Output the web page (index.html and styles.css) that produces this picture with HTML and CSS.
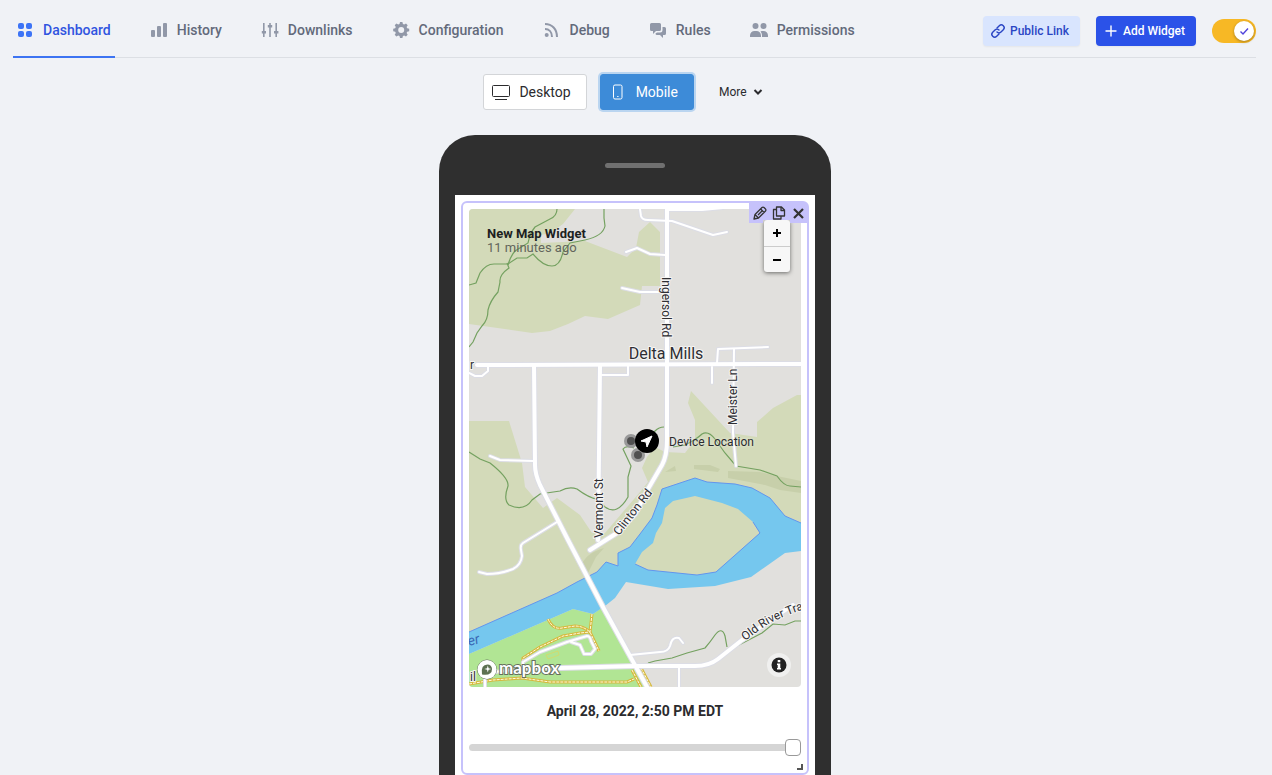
FILE: index.html
```html
<!DOCTYPE html>
<html lang="en">
<head>
<meta charset="utf-8">
<meta name="viewport" content="width=device-width, initial-scale=1">
<title>Dashboard</title>
<link rel="stylesheet" href="styles.css">
</head>
<body>
<div class="app">
  <header class="header">
    <nav class="tabs" aria-label="Sections">
      <a class="tab tab-active" href="#dashboard" aria-current="page"><svg class="tab-icon" viewBox="0 0 18 18"><rect x="1" y="2" width="6" height="6" rx="2"/><rect x="9" y="2" width="6" height="6" rx="2"/><rect x="1" y="10" width="6" height="6" rx="2"/><rect x="9" y="10" width="6" height="6" rx="2"/></svg><span>Dashboard</span></a>
      <a class="tab" href="#history"><svg class="tab-icon" viewBox="0 0 18 18"><rect x="0" y="9" width="4" height="7" rx="1"/><rect x="6" y="5" width="4" height="11" rx="1"/><rect x="12" y="2" width="4" height="14" rx="1"/></svg><span>History</span></a>
      <a class="tab" href="#downlinks"><svg class="tab-icon" viewBox="0 0 18 18"><path d="M1 2h1.600v8H4v2.500H2.600V16H1v-3.500H-.2V10H1zM7.200 2h1.600v2h1.400v2.500H8.800V16H7.200V6.500H5.800V4h1.400zM13.400 2H15v8h1.400v2.500H15V16h-1.600v-3.500H12V10h1.400z"/></svg><span>Downlinks</span></a>
      <a class="tab" href="#configuration"><svg class="tab-icon" viewBox="0 0 18 18"><path fill-rule="evenodd" d="M7 1h2.400l.5 2 1.300.6 1.800-1.100 1.700 1.700-1.100 1.800.6 1.300 2 .5v2.400l-2 .5-.6 1.300 1.100 1.800-1.700 1.700-1.800-1.100-1.300.6-.5 2H7l-.5-2-1.300-.6-1.800 1.100-1.700-1.700 1.100-1.800-.6-1.300-2-.5V7.800l2-.5.6-1.300-1.100-1.800 1.700-1.700 1.800 1.100L6.500 3zM8.200 6a3 3 0 1 0 0 6 3 3 0 0 0 0-6z"/></svg><span>Configuration</span></a>
      <a class="tab" href="#debug"><svg class="tab-icon" viewBox="0 0 18 18"><circle cx="2.700" cy="14" r="2"/><path class="line" d="M1 3c7 0 12 5 12 13M1 8c4 0 7 3 7 8"/></svg><span>Debug</span></a>
      <a class="tab" href="#rules"><svg class="tab-icon" viewBox="0 0 18 18"><path d="M1.500 2h8A1.500 1.500 0 0 1 11 3.500v5A1.500 1.500 0 0 1 9.500 10H6l-3 3v-3H1.500A1.500 1.500 0 0 1 0 8.500v-5A1.500 1.500 0 0 1 1.500 2zM12.500 6h2A1.500 1.500 0 0 1 16 7.500v5a1.500 1.500 0 0 1-1.500 1.500H13v3l-3-3H7a1.500 1.500 0 0 1-1.500-1.500L7 11.500h3a2.500 2.500 0 0 0 2.500-2.500z"/></svg><span>Rules</span></a>
      <a class="tab" href="#permissions"><svg class="tab-icon" viewBox="0 0 18 18"><circle cx="4.500" cy="5" r="3"/><circle cx="12.500" cy="5" r="3"/><path d="M-1 16v-1.500A4.500 4.500 0 0 1 3.500 10h2a4.500 4.500 0 0 1 4.500 4.500V16zM11 16v-1.500A6 6 0 0 0 9.500 10.400c.8-.3 1.600-.4 3-.4a4.500 4.500 0 0 1 4.500 4.500V16z"/></svg><span>Permissions</span></a>
    </nav>
    <div class="actions">
      <a class="btn btn-light" href="#public"><svg class="btn-icon" viewBox="0 0 14 14"><path class="line" d="M6 4l2.300-2.300a2.800 2.800 0 0 1 4 4L10 8a2.800 2.800 0 0 1-4 0M8 10l-2.300 2.300a2.800 2.800 0 0 1-4-4L4 6a2.800 2.800 0 0 1 4 0"/></svg><span>Public Link</span></a>
      <button class="btn btn-primary" type="button"><svg class="btn-icon" viewBox="0 0 14 14"><path class="line" d="M7 2v10M2 7h10"/></svg><span>Add Widget</span></button>
      <label class="toggle">
        <input class="toggle-input" type="checkbox" checked aria-label="Edit mode">
        <span class="toggle-knob"><svg viewBox="0 0 20 20"><path d="M6.500 10.500 9 13l5-5.500"/></svg></span>
      </label>
    </div>
  </header>

  <main class="main">
    <div class="devices">
      <button class="device" type="button"><svg class="device-icon" viewBox="0 0 20 18"><rect x="1.500" y="2.500" width="17" height="11" rx="1"/><path d="M4 16.500h12"/></svg><span>Desktop</span></button>
      <button class="device device-active" type="button"><svg class="device-icon" viewBox="0 0 20 18"><rect x="5.500" y="2" width="8.500" height="14" rx="1.500"/><path d="M9.200 13.500h1.300"/></svg><span>Mobile</span></button>
      <button class="more" type="button"><span>More</span><svg class="more-icon" viewBox="0 0 10 10"><path d="m1.500 3 3.500 3.500L8.500 3"/></svg></button>
    </div>

    <div class="phone">
      <div class="speaker"></div>
      <div class="screen">
        <section class="widget">
          <div class="map">
            <svg class="map-art" viewBox="469 209 332 478" role="img" aria-label="Map of Delta Mills">
              <defs>
                <path id="river-trail" d="M745 641 764 627Q777 618 808 608"/>
                <g id="roads">
                  <g class="major">
                    <path d="M477 365 801 364"/>
                    <path d="M667 209V440Q667 456 662 465L648 489 635 514 617 533 590 550"/>
                    <path d="M534 365 535 465Q535 474 540 485L567 538 603 607 647 687"/>
                    <path d="M600 366 598 540"/>
                    <path d="M560 668 635 666H695Q709 666 718 659L742 640 782 612 793 605"/>
                  </g>
                  <g class="minor">
                    <path d="M469 373 475 376H482L488 371V366"/>
                    <path d="M602 375H628V366"/>
                    <path d="M490 456 500 460 534 461"/>
                    <path d="M557 522 523 543Q520 545 521 550L522 556Q521 565 513 569 500 574 487 574L479 572"/>
                    <path d="M640 209 641 216Q642 220 648 220L672 221 713 235 727 232"/>
                    <path d="M668 210H702L723 208"/>
                    <path d="M626 252 637 248 650 254 665 255"/>
                    <path d="M622 288 640 292 660 292"/>
                    <path d="M717 363 718 349 768 347"/>
                    <path d="M734 349 733 433 736 466"/>
                    <path d="M712 367V383"/>
                    <path d="M630 655 660 652Q668 652 670 646 672 636 679 638L683 643"/>
                    <path d="M679 667V687"/>
                    <path d="M485 687V673L523 669 560 668M523 668V662L540 652 567 642 587 636Q590 636 591 641L595 649 591 654H584L580 645 571 642"/>
                  </g>
                </g>
                <g id="tracks">
                  <path d="M548 619Q553 630 562 628L575 626Q583 626 590 632L599 651"/>
                  <path d="M592 614 590 632 580 633 563 636 540 647 523 658 522 678"/>
                  <path d="M469 684 493 680 522 678 550 682H627L634 679"/>
                  <path d="M632 670 641 687M641 668 651 687"/>
                </g>
              </defs>
              <rect class="land" x="469" y="209" width="332" height="478"/>
              <g class="park">
                <path d="M469 209H575L563 224 550 233 541 235 541 243 585 241 627 257 636 248 639 232 650 222 660 232V286H642L640 305 608 319 585 316 568 324 550 331 532 333 469 324Z"/>
                <path d="M469 421H509L522 463 525 487 543 508 557 498 580 515 592 533 605 533 640 492 648 482 642 468 647 457 655 447 665 452 685 453 695 440V420L688 403 691 391 730 433 757 437V422L773 408 797 395H801V530L640 560 469 645Z"/>
              </g>
              <path class="shade" d="M665 472 675 466 676 471ZM694 465 710 465 720 469 718 472 694 469ZM728 471 760 472 777 476 801 481V493L780 490 765 485 728 478ZM580 568Q585 553 604 548L596 557 588 573Z"/>
              <path class="grass" d="M469 654 573 609 593 614 603 607 645 687H469Z"/>
              <path class="water" d="M469 632 557 593 577 582 597 572 606 562 618 566V553L630 547 640 534 652 518 657 505 662 489 695 478 707 482 735 484 752 488 770 498 785 516 801 523V551L785 553 751 577 715 586 668 589 626 582 615 598 605 606 593 614 573 609 469 654Z"/>
              <path class="shore" d="M469 632 557 593 577 582 597 572 606 562 618 566V553L630 547 640 534 652 518 657 505 662 489 695 478 707 482 735 484 752 488 770 498 785 516 801 523"/>
              <path class="island" d="M695 496 722 503 738 509 753 522 760 533 716 572 697 575 648 570 635 564 642 552 653 543 656 533 662 523 665 508 673 501Z"/>
              <path class="shore" d="M753 522 760 533 716 572 697 575 648 570 635 564"/>
              <g class="trail">
                <path d="M557 209Q557 216 550 219L535 227Q530 233 528 243L515 251Q510 257 508 265"/>
                <path d="M469 285 476 283 480 273Q486 264 494 264H508L517 258H527L533 254Q543 266 552 266 560 266 563 252L570 243 585 240Q603 236 605 226L604 218V209"/>
                <path d="M507 263 509 268Q499 275 500 282L498 292Q490 301 488 310 488 320 482 326L477 333 473 342 469 347"/>
                <path d="M469 452 480 459 490 463Q509 478 508 486 503 500 509 505 524 512 532 500L540 494 560 491Q569 486 577 489 589 498 597 499L605 507Q617 516 628 497V477L631 466 623 449Q626 445 634 448"/>
                <path d="M645 442 655 431Q659 427 664 427M673 447 685 445Q697 439 702 434 708 430 715 439L725 453 736 466 760 470 777 476Q784 486 790 486L801 487"/>
                <path d="M648 663 655 661 672 658 687 653 705 648Q711 641 715 635 722 626 725 636L727 647M737 646 762 633 773 624 785 625 795 621H801"/>
              </g>
              <path class="field" d="M546 655 558 651 559 655 548 659Z"/>
              <use href="#tracks" class="track-case"/>
              <use href="#tracks" class="track-dash"/>
              <use href="#roads" class="road-case"/>
              <use href="#roads" class="road-fill"/>
              <g class="place">
                <text class="town" x="666" y="359" text-anchor="middle">Delta Mills</text>
                <text transform="translate(662 277) rotate(90)">Ingersol Rd</text>
                <text transform="translate(737 425) rotate(-90)">Meister Ln</text>
                <text transform="translate(603 538) rotate(-90)">Vermont St</text>
                <text transform="translate(619 536) rotate(-52)">Clinton Rd</text>
                <text><textPath href="#river-trail">Old River Trai</textPath></text>
                <text x="470" y="369">r</text>
                <text x="470" y="681">il</text>
              </g>
              <text class="river" transform="translate(469 646) rotate(-15)">er</text>
              <circle class="halo" cx="631" cy="441" r="7"/><circle class="halo" cx="638" cy="455" r="7"/>
              <circle class="point" cx="631" cy="441" r="4"/><circle class="point" cx="638" cy="455" r="4"/>
              <circle class="device-pin" cx="647" cy="441" r="12"/>
              <path class="arrow" d="M652 436 641 441 646 442 647 447Z"/>
              <g class="logo">
                <circle cx="487" cy="669.500" r="9.500"/>
                <path class="logo-pin" d="M482 674.500Q480.500 664.500 487.500 664.500A4.500 4.500 0 0 1 492 669Q492 676 482 674.500Z"/>
                <path class="logo-star" d="M487.800 665.500 488.600 668.200 491.300 669 488.600 669.800 487.800 672.500 487 669.800 484.300 669 487 668.200Z"/>
                <text x="499" y="674">mapbox</text>
              </g>
            </svg>
            <div class="map-title">
              <h2 class="title">New Map Widget</h2>
              <p class="age">11 minutes ago</p>
            </div>
            <span class="device-label">Device Location</span>
            <div class="zoom">
              <button class="zoom-btn" type="button" aria-label="Zoom in"><svg viewBox="0 0 10 10"><path d="M5 1v8M1 5h8"/></svg></button>
              <button class="zoom-btn" type="button" aria-label="Zoom out"><svg viewBox="0 0 10 10"><path d="M1 5h8"/></svg></button>
            </div>
            <button class="info" type="button" aria-label="Map information"><svg viewBox="0 0 24 24"><circle cx="12" cy="12" r="7.500"/><path d="M10.700 7h2.600v2.300h-2.600zM10 10.500h3.300v4.500H14v1.500h-4V15h.7v-3H10z"/></svg></button>
          </div>
          <div class="widget-tools">
            <button class="tool" type="button" aria-label="Edit"><svg viewBox="0 0 14 14"><path d="m1 13 1-4.500 7-7a1.400 1.400 0 0 1 2 0l1.500 1.500a1.400 1.400 0 0 1 0 2l-7 7zM7.700 3l3.500 3.500M2 8.500 5.500 12M5 9l4-4"/></svg></button>
            <button class="tool" type="button" aria-label="Duplicate"><svg viewBox="0 0 14 14"><path d="M4.500 1h5L12.500 4v6h-8zM9 1v3.500h3.500M4.500 3.500h-3V13h7.500v-3"/></svg></button>
            <button class="tool tool-close" type="button" aria-label="Remove"><svg viewBox="0 0 14 14"><path d="m3 3 9 9m0-9-9 9"/></svg></button>
          </div>
          <label class="date" for="time">April 28, 2022, 2:50 PM EDT</label>
          <input class="slider" id="time" type="range" min="0" max="100" value="100">
          <span class="resize"></span>
        </section>
      </div>
    </div>
  </main>
</div>
</body>
</html>
```
FILE: styles.css
```css
* { box-sizing: border-box; }
body {
  margin: 0;
  background: #f0f2f6;
  color: #2b2b2e;
  font: 14px/20px Roboto, "Liberation Sans", sans-serif;
}
button { font: inherit; color: inherit; margin: 0; cursor: pointer; }
a { text-decoration: none; }
svg { display: block; flex-shrink: 0; fill: none; overflow: visible; }
.app { height: 100vh; overflow: hidden; }

.header {
  display: flex;
  justify-content: space-between;
  margin: 0 16px 0 13px;
  border-bottom: 1px solid #dcdfe4;
}
.tabs { display: flex; gap: 32px; margin-bottom: -1px; }
.tab {
  display: flex;
  align-items: center;
  gap: 8px;
  padding: 4px 4px 0;
  height: 58px;
  border-bottom: 2px solid transparent;
  color: #636a7b;
  font-weight: 500;
}
.tab-active { color: #3055e0; border-color: #3d74f2; }
.tab-icon { width: 18px; height: 18px; fill: #9198a8; }
.tab-active .tab-icon { fill: #3d74f6; }
.tab-icon .line { fill: none; stroke: #9198a8; stroke-width: 2; }

.actions { display: flex; align-items: center; gap: 16px; padding-top: 4px; }
.btn {
  display: flex;
  align-items: center;
  gap: 5px;
  height: 30px;
  padding: 0 11px 0 8px;
  border: 0;
  border-radius: 4px;
  font-size: 12px;
  font-weight: 500;
  box-shadow: 0 1px 2px #0000000d;
}
.btn-light { background: #d9e5fe; color: #2a45c4; }
.btn-primary { background: #2b52e8; color: #fff; }
.btn-icon { width: 14px; height: 14px; stroke: currentColor; stroke-width: 1.4; stroke-linecap: round; }
.toggle { position: relative; display: block; width: 44px; height: 24px; }
.toggle-input {
  appearance: none;
  display: block;
  width: 44px;
  height: 24px;
  margin: 0;
  border-radius: 12px;
  background: #c5c9d1;
}
.toggle-input:checked { background: #f7b825; }
.toggle-knob {
  position: absolute;
  top: 2px;
  right: 2px;
  width: 20px;
  height: 20px;
  border-radius: 50%;
  background: #fff;
  box-shadow: 0 1px 3px #0005;
  pointer-events: none;
}
.toggle-knob svg { stroke: #5143dc; stroke-width: 1.4; }

.main { padding: 16px 15px 0 13px; }
.devices { display: flex; justify-content: center; gap: 13px; }
.device {
  display: flex;
  align-items: center;
  gap: 8px;
  height: 36px;
  padding: 0 15px 0 7px;
  border: 1px solid #d3d5d8;
  border-radius: 3px;
  background: #fff;
  font-size: 14px;
}
.device-active {
  border-color: #3d8bd8;
  background: #3d8bd8;
  color: #fff;
  box-shadow: 0 0 0 2px #bad5f0;
}
.device-icon { width: 20px; height: 18px; stroke: currentColor; }
.more {
  display: flex;
  align-items: center;
  gap: 6px;
  padding: 0 24px 0 12px;
  border: 0;
  background: none;
  font-size: 12px;
}
.more-icon { width: 10px; height: 10px; stroke: currentColor; stroke-width: 2; }

.phone {
  width: 392px;
  margin: 25px auto 0;
  padding: 28px 16px 60px;
  border-radius: 36px;
  background: #2f2f2f;
}
.speaker { width: 60px; height: 5px; margin: 0 auto 27px; border-radius: 3px; background: #707070; }
.screen { min-height: 640px; padding: 6px; background: #fff; }
.widget {
  position: relative;
  padding: 6px 6px 17px;
  border: 2px solid #c6c2fb;
  border-radius: 6px;
}
.map { position: relative; border-radius: 4px; overflow: hidden; z-index: 1; }
.map-art { width: 100%; height: auto; overflow: hidden; }
.land { fill: #e1e0dd; }
.park, .island { fill: #d3dab9; }
.shade { fill: #c7cfaa; }
.grass { fill: #b1e594; }
.water { fill: #75c7ee; }
.shore { stroke: #6295ee; }
.trail { stroke: #74a160; stroke-width: 1.2; }
.field { stroke: #d0dc70; }
.track-case { stroke: #d6b83c; stroke-width: 3; }
.track-dash { stroke: #fffbe0; stroke-width: 1; stroke-dasharray: 3 1; }
.major, .minor { stroke-linecap: round; stroke-linejoin: round; }
.road-case { stroke: #dcdde5; }
.road-fill { stroke: #fff; }
.major { stroke-width: var(--major); }
.minor { stroke-width: var(--minor); }
.road-case { --major: 6px; --minor: 4px; }
.road-fill { --major: 4px; --minor: 2px; }
.place { fill: #2e2e33; stroke: #f6f5f3; stroke-width: 2; paint-order: stroke; stroke-linejoin: round; font-size: 12px; }
.town { font-size: 16px; }
.river { fill: #3b68b4; font-size: 14px; font-style: italic; }
.halo { fill: #999; }
.point { fill: #505050; }
.device-pin { fill: #000; }
.arrow { fill: #fff; stroke: #fff; stroke-linejoin: round; }
.logo { fill: #fff; stroke: #66705e; stroke-width: 1; paint-order: stroke; }
.logo text { font: 700 17px Lato, sans-serif; stroke-width: 2; }
.logo .logo-pin { fill: #5d7052; stroke: none; }
.logo .logo-star { fill: #fff; stroke: none; }

.map-title { position: absolute; top: 18px; left: 18px; line-height: 14px; font-size: 13px; }
.title { margin: 0; font-size: 13px; color: #1d1f22; }
.age { margin: 0; color: #62655c; }
.device-label {
  position: absolute;
  top: 226px;
  left: 200px;
  font-size: 12px;
  line-height: 14px;
  text-shadow: 0 0 3px #f0f0e8;
}
.zoom {
  position: absolute;
  top: 11px;
  right: 11px;
  width: 26px;
  border-radius: 3px;
  background: #f7f7f7;
  box-shadow: 0 1px 4px #0008;
}
.zoom-btn { display: grid; place-items: center; width: 100%; height: 26px; padding: 0; border: 0; background: none; }
.zoom-btn + .zoom-btn { border-top: 1px solid #ccc; }
.zoom-btn svg { width: 10px; height: 10px; stroke: #000; stroke-width: 2; }
.info {
  position: absolute;
  right: 10px;
  bottom: 10px;
  width: 24px;
  height: 24px;
  padding: 0;
  border: 0;
  border-radius: 50%;
  background: #f0f0ef;
}
.info circle { fill: #222; }
.info path { fill: #fff; }
.widget-tools {
  position: absolute;
  top: 0;
  right: 0;
  z-index: 2;
  display: flex;
  gap: 5px;
  height: 20px;
  padding: 3px 2px 0 4px;
  background: #c6c2fb;
  clip-path: polygon(0 0, 100% 0, 100% 100%, 41px 100%, 41px 17px, 14px 17px, 14px 100%, 0 100%);
}
.tool { width: 14px; height: 14px; padding: 0; border: 0; background: none; }
.tool svg { stroke: #333; stroke-width: 1.3; stroke-linejoin: round; }
.tool-close svg { stroke-width: 2.2; }
.date { display: block; margin-top: 14px; text-align: center; font-weight: 700; }
.slider {
  appearance: none;
  display: block;
  width: 100%;
  height: 7px;
  margin: 23px 0 5px;
  border-radius: 4px;
  background: #d5d5d5;
}
.slider::-webkit-slider-thumb {
  appearance: none;
  width: 16px;
  height: 17px;
  border: 1px solid #999;
  border-radius: 4px;
  background: #fff;
}
.resize {
  position: absolute;
  right: 4px;
  bottom: 3px;
  width: 6px;
  height: 6px;
  border: solid #555;
  border-width: 0 2px 2px 0;
}
```
